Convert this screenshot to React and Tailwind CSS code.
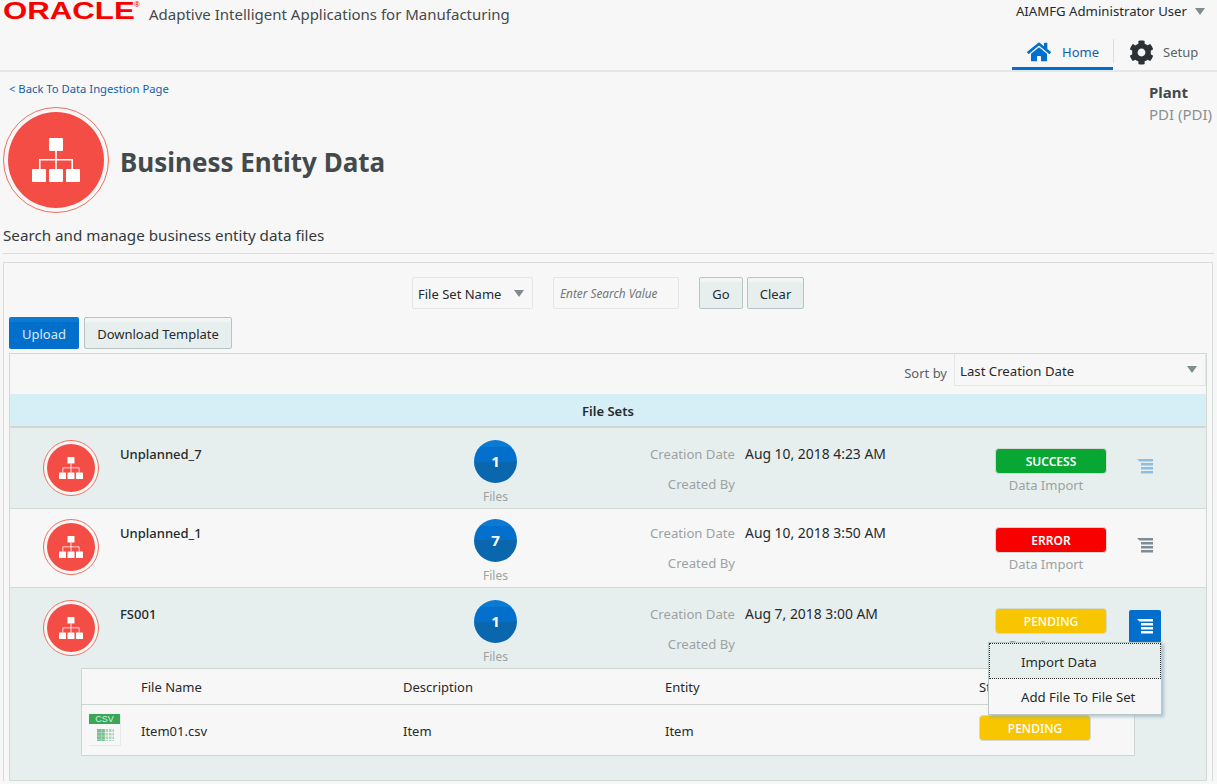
import { FaHome, FaCog } from 'react-icons/fa';

const Caret = ({ className = '' }) => (
  <svg viewBox="0 0 10 7" className={`w-[10px] h-[7px] ${className}`}>
    <path d="M0 0h10L5 7z" fill="#7f8c8f" />
  </svg>
);

// bars stacked, top one is longer with a slanted left end
const MenuIcon = ({ color }) => (
  <svg viewBox="0 0 16 15" className="w-4 h-[15px]" fill={color}>
    <path d="M0 0h16v2.5H2.5z" />
    <rect x="4" y="4" width="12" height="2.5" />
    <rect x="4" y="8" width="12" height="2.5" />
    <rect x="4" y="12" width="12" height="2.5" />
  </svg>
);

// org chart glyph, drawn on a 48 unit grid
const EntityGlyph = ({ className }) => (
  <svg viewBox="0 0 48 44" className={className} fill="#fff">
    <rect x="17" y="0" width="14" height="13" rx="1" />
    <rect x="0" y="31" width="14" height="13" rx="1" />
    <rect x="17" y="31" width="14" height="13" rx="1" />
    <rect x="34" y="31" width="14" height="13" rx="1" />
    <path d="M23.2 13h1.6v8H41v10h-1.6v-8.4h-14.6V31h-1.6v-8.4H8.6V31H7V21h16.2z" />
  </svg>
);

const EntityBadge = ({ big }) => (
  <div className={`shrink-0 rounded-full border border-[#f0705f] bg-[#f7f7f7] flex items-center justify-center ${big ? 'w-[106px] h-[106px]' : 'w-[56px] h-[56px]'}`}>
    <div className={`rounded-full bg-[#f34d45] flex items-center justify-center ${big ? 'w-[96px] h-[96px]' : 'w-[48px] h-[48px]'}`}>
      <EntityGlyph className={big ? 'w-[48px] h-[44px]' : 'w-[24px] h-[22px]'} />
    </div>
  </div>
);

const StatusPill = ({ label, color, className = '' }) => (
  <div className={`w-[112px] h-[26px] pt-[2px] shrink-0 rounded-[4px] border border-[#d5d9d0] flex items-center justify-center text-[12px] text-white ${color} ${className}`}>
    {label}
  </div>
);

const FileSetRow = ({ name, count, date, status, color, iconColor, bg, head, children, active }) => (
  <div className={`relative border-b border-[#d3dad5] ${bg}`}>
    <div className={`flex items-start ${head}`}>
      <div className="w-[110px] pl-[33px] shrink-0">
        <EntityBadge />
      </div>
      <div className="w-[354px] shrink-0 pt-[5px] text-[13px] font-medium text-[#252a2c]">{name}</div>
      <div className="w-[43px] shrink-0 flex flex-col items-center">
        <div className="w-[43px] h-[43px] shrink-0 rounded-full bg-[linear-gradient(#0a7ad3_0%,#0a7ad3_16%,#036fcd_16%,#036fcd_50%,#0a66ad_50%,#0a66ad_100%)] flex items-center justify-center text-white font-bold text-[15px]">
          {count}
        </div>
        <div className="mt-[5px] text-[12px] leading-[18px] text-[#9aa3a3]">Files</div>
      </div>
      <div className="w-[218px] shrink-0 flex flex-col items-end text-[13.15px] text-[#9aa3a3] pt-[5px] gap-[12px] leading-[18px]">
        <div>Creation Date</div>
        <div>Created By</div>
      </div>
      <div className="w-[260px] shrink-0 pl-[10px] pt-[5px] text-[13.9px] leading-[18px] text-[#252a2c]">{date}</div>
      <div className="w-[112px] shrink-0 pt-[8px] flex flex-col items-center">
        <StatusPill label={status} color={color} />
        <div className="mt-[2px] mr-[10px] text-[13px] leading-[18px] text-[#9aa3a3]">Data Import</div>
      </div>
      <div className={active ? 'ml-[22px] mt-[10px] w-[32px] h-[33px] rounded-[2px] bg-[#036fcd] flex items-center justify-center' : 'ml-[30px] mt-[19px]'}>
        <MenuIcon color={iconColor} />
      </div>
    </div>
    {children}
  </div>
);

const FileTable = () => (
  <div className="ml-[71px] w-[1054px] mb-[24px] border border-[#cfd6d0] bg-[#f7f7f7] text-[13px] text-[#252a2c]">
    <div className="flex items-center h-[36px] pt-[2px] border-b border-[#cfd6d0]">
      <div className="w-[59px] shrink-0" />
      <div className="w-[262px] shrink-0">File Name</div>
      <div className="w-[262px] shrink-0">Description</div>
      <div className="w-[314px] shrink-0">Entity</div>
      <div>Status</div>
    </div>
    <div className="flex items-start h-[50px]">
      <div className="w-[59px] shrink-0 pl-[7px] pt-[9px]">
        <div className="w-[32px] h-[32px] border-r border-b border-[#e4eaea]">
          <div className="h-[10px] bg-[#3aa757] text-[#d9f0df] text-[9px] leading-[10px] text-center font-['Liberation_Sans',sans-serif]">CSV</div>
          <svg viewBox="0 0 17 12" className="w-[17px] h-[12px] ml-[8px] mt-[5px]">
            <rect width="17" height="12" fill="#a9d4b6" />
            <path d="M0 3.5h17M0 7h17M0 10.5h17M4.5 0v12M8 0v12M11.5 0v12M15 0v12" stroke="#f0f7f2" strokeWidth="1" />
            <rect width="8" height="12" y="0" fill="#4aa56c" opacity=".45" />
          </svg>
        </div>
      </div>
      <div className="w-[262px] shrink-0 pt-[17px]">Item01.csv</div>
      <div className="w-[262px] shrink-0 pt-[17px]">Item</div>
      <div className="w-[314px] shrink-0 pt-[17px]">Item</div>
      <StatusPill label="PENDING" color="bg-[#f7c600] font-medium" className="mt-[10px]" />
    </div>
  </div>
);

const RowMenu = () => (
  <div className="absolute left-[978px] top-[54px] w-[174px] bg-[#f7f7f7] border border-[#b9c7c7] shadow-[2px_2px_3px_rgba(120,160,190,0.55)] text-[13.2px] text-[#252a2c]">
    <div className="h-[36px] pl-[31px] pt-[3px] flex items-center bg-[#e7efee] border border-dotted border-[#333]">Import Data</div>
    <div className="h-[35px] pl-[32px] pt-[3px] flex items-center">Add File To File Set</div>
  </div>
);

export default function App() {
  return (
    <div className="w-[1217px] h-[784px] overflow-hidden bg-[#f7f7f7] font-['Noto_Sans',sans-serif] text-[#252a2c]">
      {/* Header */}
      <div className="h-[72px] border-b-2 border-[#e3e7e7] flex flex-col">
        <div className="h-[36px] flex items-start shrink-0">
          <div className="w-[149px] shrink-0 pl-[3px] relative">
            <span className="block origin-left scale-x-[1.3] font-['Liberation_Sans',sans-serif] text-[#f80000] text-[24px] leading-[22px] font-bold">ORACLE</span>
            <span className="absolute left-[134px] top-0 text-[7px] leading-[10px] text-[#f80000]">®</span>
          </div>
          <div className="text-[15px] leading-[28px] text-[#434a4c]">Adaptive Intelligent Applications for Manufacturing</div>
          <div className="ml-auto flex items-center h-[22px] pr-[12px] text-[13.2px]">
            <span className="pt-[1px]">AIAMFG Administrator User</span>
            <Caret className="ml-[8px]" />
          </div>
        </div>
        <div className="flex-1 flex justify-end items-stretch pr-[18px]">
          <div className="w-[101px] border-b-[3px] border-[#036fcd] flex items-center pl-[15px] gap-[11px] text-[13px] text-[#145fa8]">
            <FaHome className="w-[24px] h-[24px] text-[#036fcd]" />
            <span className="pt-[2px]">Home</span>
          </div>
          <div className="w-[1px] h-[24px] mt-[3px] bg-[#e6d9d9]" />
          <div className="w-[85px] flex items-center pl-[15px] pb-[1px] gap-[9px] text-[13px] text-[#5a6366]">
            <FaCog className="w-[25px] h-[25px] text-[#2c3133]" />
            <span>Setup</span>
          </div>
        </div>
      </div>

      {/* Page title */}
      <div className="relative h-[181px] px-[3px] pt-[9px]">
        <div className="pl-[6px] text-[11.25px] leading-[16px] text-[#145fa8]">&lt; Back To Data Ingestion Page</div>
        <div className="flex items-center gap-[11px] mt-[10px]">
          <EntityBadge big />
          <h1 className="pt-[4px] text-[26px] font-bold text-[#434a4c]">Business Entity Data</h1>
        </div>
        <p className="mt-[11px] text-[15.2px] leading-[22px] text-[#333a3c]">Search and manage business entity data files</p>
        <div className="absolute right-[4px] top-[9px] w-[64px]">
          <div className="text-[15px] font-bold leading-[22px] text-[#434a4c]">Plant</div>
          <div className="text-[15px] leading-[23px] text-[#8a9192] whitespace-nowrap">PDI (PDI)</div>
        </div>
      </div>

      {/* Panel */}
      <div className="border-t border-[#d8dcdc] mx-[3px] pt-[8px]">
        <div className="border-t border-l border-r border-[#d8dcdc] px-[5px] w-[1210px]">
          {/* Search */}
          <div className="h-[54px] pt-[14px] flex items-start text-[13px]">
            <div className="ml-[403px] w-[121px] h-[32px] border border-[#e8e4e4] rounded-[2px] flex items-center justify-between pl-[5px] pr-[8px]">
              <span className="pt-[3px]">File Set Name</span>
              <Caret />
            </div>
            <div className="ml-[20px] w-[126px] h-[32px] border border-[#e8e4e4] rounded-[2px] flex items-center pl-[6px] pt-[1px] text-[11.8px] italic text-[#6f7779]">Enter Search Value</div>
            <button className="ml-[20px] w-[44px] h-[32px] pt-[3px] rounded-[2px] border border-[#b5c5c3] bg-[linear-gradient(#f1f6f5_0%,#f1f6f5_12%,#e7efee_12%)]">Go</button>
            <button className="ml-[4px] w-[57px] h-[32px] pt-[3px] rounded-[2px] border border-[#b5c5c3] bg-[linear-gradient(#f1f6f5_0%,#f1f6f5_12%,#e7efee_12%)]">Clear</button>
          </div>
          {/* Actions */}
          <div className="flex gap-[5px] text-[13px]">
            <button className="w-[70px] h-[32px] pt-[3px] rounded-[2px] bg-[linear-gradient(#0a7ad3_0%,#0a7ad3_15%,#036fcd_15%)] text-[#dbe9f7]">Upload</button>
            <button className="w-[148px] h-[32px] pt-[3px] rounded-[2px] border border-[#b5c5c3] bg-[linear-gradient(#f1f6f5_0%,#f1f6f5_12%,#e7efee_12%)]">Download Template</button>
          </div>
          {/* File sets */}
          <div className="mt-[4px] border-l border-r border-t border-[#d3d8d5] w-[1198px]">
            <div className="h-[40px] flex justify-end items-start text-[13px]">
              <span className="mt-[10px] mr-[7px] text-[#596164]">Sort by</span>
              <div className="w-[252px] h-[32px] border-b border-r border-l border-[#e6e6e6] flex items-center justify-between pl-[5px] pr-[8px] text-[13.2px]">
                <span className="pt-[5px]">Last Creation Date</span>
                <Caret />
              </div>
            </div>
            <div className="h-[34px] pt-[4px] bg-[#d6eff6] border-b-2 border-[#d0d8d2] flex items-center justify-center text-[13px] font-semibold">File Sets</div>
            <FileSetRow name="Unplanned_7" count="1" date="Aug 10, 2018 4:23 AM" status="SUCCESS" color="bg-[#08a733] font-semibold" iconColor="#8cbfe0" bg="bg-[#e7efee]" head="h-[80px] pt-[12px]" />
            <FileSetRow name="Unplanned_1" count="7" date="Aug 10, 2018 3:50 AM" status="ERROR" color="bg-[#f80000] font-semibold" iconColor="#7f8c96" bg="bg-[#f7f7f7]" head="h-[78px] pt-[10px]" />
            <FileSetRow name="FS001" count="1" date="Aug 7, 2018 3:00 AM" status="PENDING" color="bg-[#f7c600] font-medium" iconColor="#fff" bg="bg-[#e7efee]" head="h-[80px] pt-[12px]" active>
              <FileTable />
              <RowMenu />
            </FileSetRow>
          </div>
        </div>
      </div>
    </div>
  );
}
